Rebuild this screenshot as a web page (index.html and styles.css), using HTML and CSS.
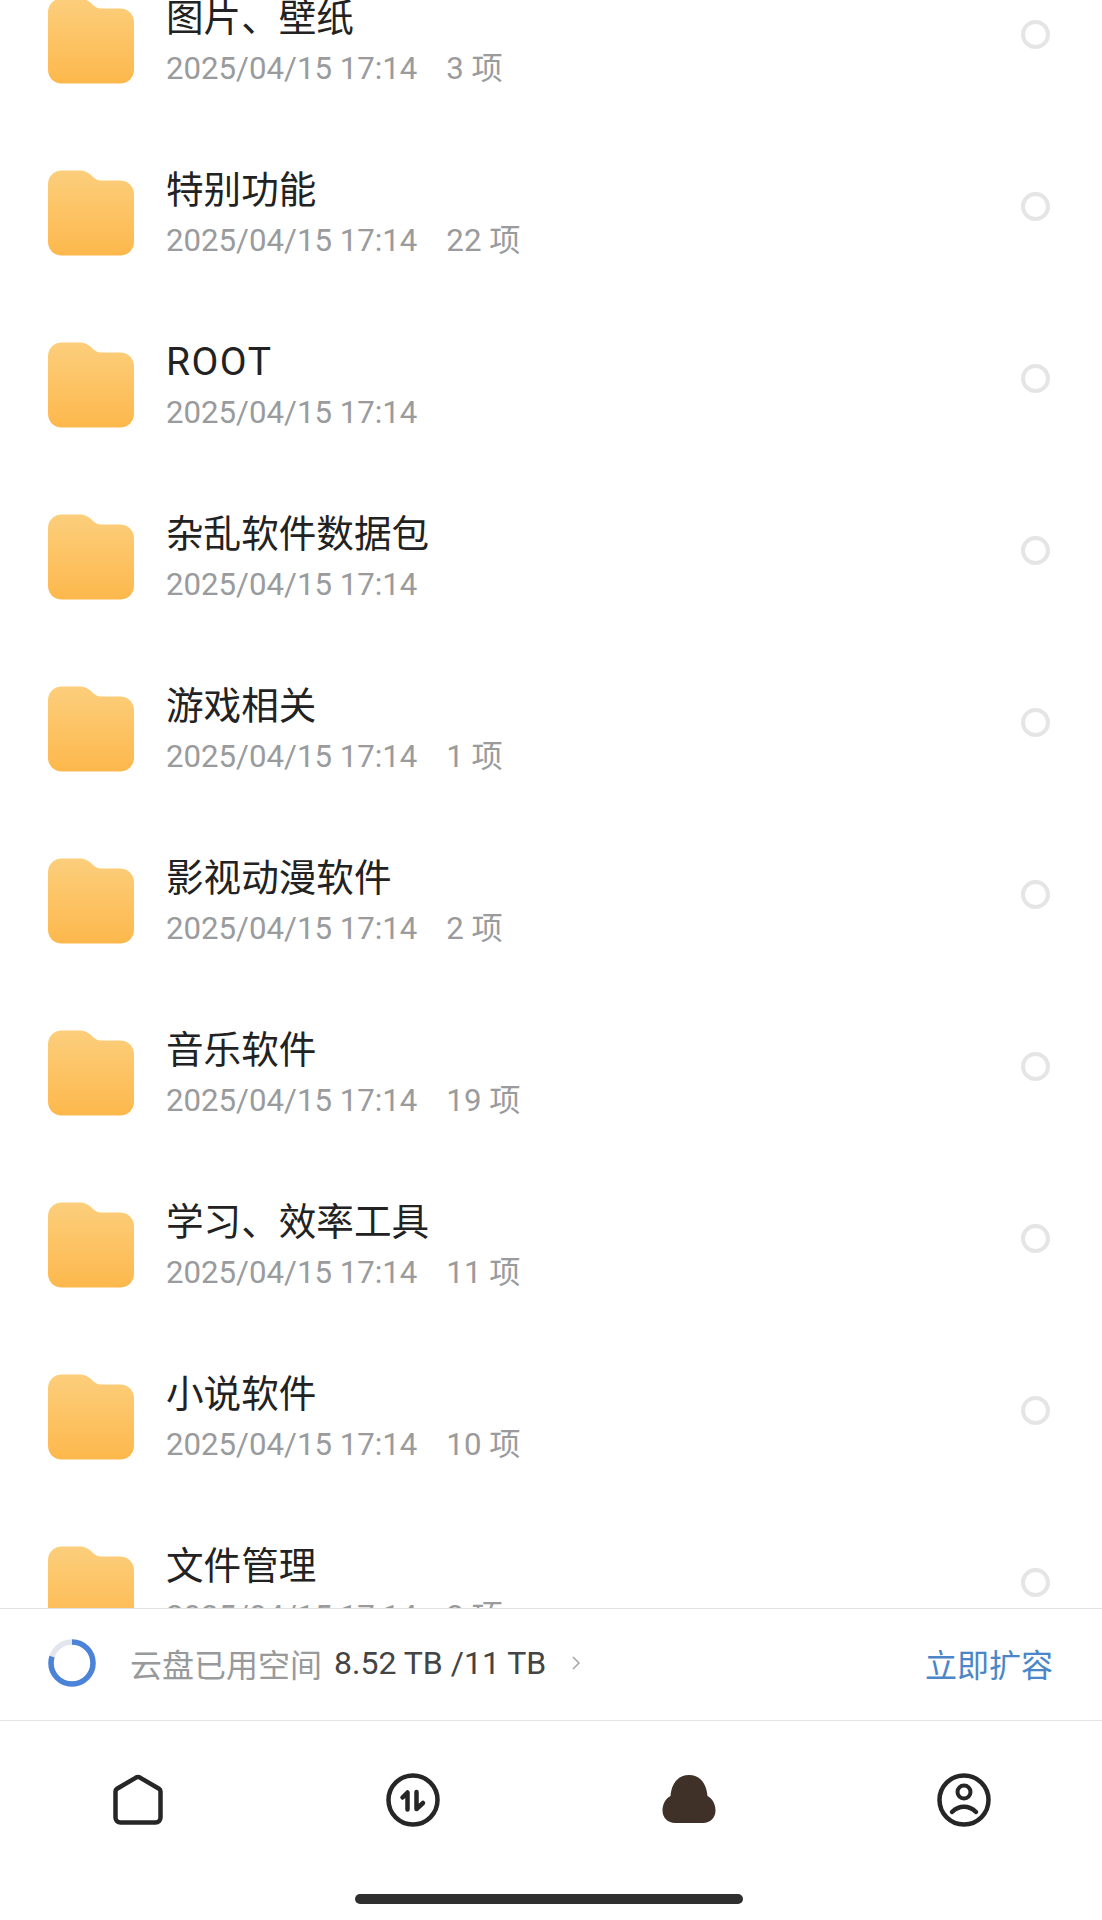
FILE: index.html
```html
<!DOCTYPE html>
<html lang="zh-CN">
<head>
<meta charset="utf-8">
<title>云盘</title>
<link rel="stylesheet" href="styles.css">
</head>
<body>
<svg class="defs" width="0" height="0" aria-hidden="true">
  <defs>
    <linearGradient id="fg" x1="0" y1="0" x2="0" y2="1">
      <stop offset="0" stop-color="#fcce7c"/>
      <stop offset="1" stop-color="#fdb84c"/>
    </linearGradient>
    <symbol id="folder" viewBox="0 0 87 86">
      <path fill="url(#fg)" d="M0 14C0 6 6 0 14 0H31C37 0 41 2 45 6C48 9 50 10 54 10H73C81 10 87 16 87 24V72C87 80 81 86 73 86H14C6 86 0 80 0 72Z"/>
    </symbol>
  </defs>
</svg>
<div class="page">
  <main class="list">
    <div class="row"><svg class="folder"><use href="#folder"/></svg><div class="info"><div class="name">图片、壁纸</div><div class="meta"><span>2025/04/15 17:14</span><span class="count">3 项</span></div></div><span class="radio"></span></div>
    <div class="row"><svg class="folder"><use href="#folder"/></svg><div class="info"><div class="name">特别功能</div><div class="meta"><span>2025/04/15 17:14</span><span class="count">22 项</span></div></div><span class="radio"></span></div>
    <div class="row"><svg class="folder"><use href="#folder"/></svg><div class="info"><div class="name name-latin">ROOT</div><div class="meta"><span>2025/04/15 17:14</span></div></div><span class="radio"></span></div>
    <div class="row"><svg class="folder"><use href="#folder"/></svg><div class="info"><div class="name">杂乱软件数据包</div><div class="meta"><span>2025/04/15 17:14</span></div></div><span class="radio"></span></div>
    <div class="row"><svg class="folder"><use href="#folder"/></svg><div class="info"><div class="name">游戏相关</div><div class="meta"><span>2025/04/15 17:14</span><span class="count">1 项</span></div></div><span class="radio"></span></div>
    <div class="row"><svg class="folder"><use href="#folder"/></svg><div class="info"><div class="name">影视动漫软件</div><div class="meta"><span>2025/04/15 17:14</span><span class="count">2 项</span></div></div><span class="radio"></span></div>
    <div class="row"><svg class="folder"><use href="#folder"/></svg><div class="info"><div class="name">音乐软件</div><div class="meta"><span>2025/04/15 17:14</span><span class="count">19 项</span></div></div><span class="radio"></span></div>
    <div class="row"><svg class="folder"><use href="#folder"/></svg><div class="info"><div class="name">学习、效率工具</div><div class="meta"><span>2025/04/15 17:14</span><span class="count">11 项</span></div></div><span class="radio"></span></div>
    <div class="row"><svg class="folder"><use href="#folder"/></svg><div class="info"><div class="name">小说软件</div><div class="meta"><span>2025/04/15 17:14</span><span class="count">10 项</span></div></div><span class="radio"></span></div>
    <div class="row"><svg class="folder"><use href="#folder"/></svg><div class="info"><div class="name">文件管理</div><div class="meta"><span>2025/04/15 17:14</span><span class="count">2 项</span></div></div><span class="radio"></span></div>
  </main>
  <section class="storage">
    <svg class="ring" viewBox="0 0 48 48">
      <circle class="ring-bg" cx="24" cy="24" r="21"/>
      <circle class="ring-fg" cx="24" cy="24" r="21" pathLength="100" stroke-dasharray="80 100" transform="rotate(-90 24 24)"/>
    </svg>
    <span class="label">云盘已用空间</span>
    <span class="used">8.52 TB /11 TB</span>
    <svg class="chev" viewBox="0 0 10 16"><path d="M2 2l6 6-6 6"/></svg>
    <span class="expand">立即扩容</span>
  </section>
  <nav class="nav">
    <div class="tabs">
      <div class="tab">
        <svg class="icon" viewBox="0 0 54 54"><path class="line" d="M4.5 18.5C4.5 17.3 5 16.4 6 15.8L25 4.6C26.3 3.9 27.7 3.9 29 4.6L48 15.8C49 16.4 49.5 17.3 49.5 18.5V44.5C49.5 47.3 47.3 49.5 44.5 49.5H9.5C6.700 49.5 4.500 47.3 4.500 44.500Z"/></svg>
      </div>
      <div class="tab">
        <svg class="icon" viewBox="0 0 54 54"><circle class="line" cx="27" cy="27" r="24.500"/><path class="line" d="M16.500 24.500L21.500 19.500V36.500M30.500 19V36L37 30"/></svg>
      </div>
      <div class="tab">
        <svg class="icon" viewBox="0 0 54 54"><path class="cloud" d="M13 50C6 50 .5 45 .5 37.500C.5 30.500 4 25.500 8.500 23C9.500 10 16.500 2 27 2S44.500 10 45.500 23C50 25.500 53.500 30.500 53.500 37.500C53.500 45 48 50 41 50Z"/></svg>
      </div>
      <div class="tab">
        <svg class="icon" viewBox="0 0 54 54"><circle class="line" cx="27" cy="27" r="24.500"/><circle class="line head" cx="27" cy="19" r="6.500"/><path class="line" d="M15 39C22 32 32 32 39 39"/></svg>
      </div>
    </div>
    <div class="home-bar"></div>
  </nav>
</div>
</body>
</html>
```
FILE: styles.css
```css
* { box-sizing: border-box; }
html, body { margin: 0; padding: 0; background: #fff; }
body { font-family: Roboto, "Noto Sans CJK SC", sans-serif; }
.defs { display: block; height: 0; }
.page { width: 1102px; height: 1920px; display: flex; flex-direction: column; overflow: hidden; }
.list { flex: 1; min-height: 0; overflow: hidden; }
.row { height: 172px; padding: 0 43px 0 48px; display: flex; align-items: center; }
.row:first-child { margin-top: -46px; }
.folder { width: 86px; height: 86px; flex: none; margin-top: 1px; }
.info { flex: 1; margin-left: 32px; min-width: 0; padding-top: 3px; }
.name { font-size: 37.600px; line-height: 48px; color: #222; height: 48px; }
.name-latin { font-size: 39px; letter-spacing: 1.500px; }
.meta { font-size: 31.200px; line-height: 42px; margin-top: 6px; color: #9a9b9d; white-space: nowrap; }
.count { margin-left: 29px; }
.radio { width: 29px; height: 29px; border: 4px solid #e5e5e5; border-radius: 50%; flex: none; margin: 0 9px 12px 0; }
.storage { height: 113px; flex: none; display: flex; align-items: center; padding: 0 49px 4px 48px; border-top: 1px solid #e2e2e2; border-bottom: 1px solid #e6e6e6; background: #fff; }
.ring { width: 48px; height: 48px; flex: none; }
.ring-bg, .ring-fg { fill: none; stroke-width: 5.500; }
.ring-bg { stroke: #e3e5ec; }
.ring-fg { stroke: #4a83d8; }
.label { margin-left: 34px; font-size: 32px; color: #97999b; }
.used { margin-left: 12px; font-size: 32px; color: #444; }
.chev { width: 10px; height: 16px; margin-left: 25px; fill: none; stroke: #a5a5a5; stroke-width: 1.500; }
.expand { margin-left: auto; font-size: 32px; color: #4a86c8; }
.nav { height: 199px; flex: none; display: flex; flex-direction: column; }
.tabs { display: grid; grid-template-columns: repeat(4, 1fr); padding-top: 52px; }
.tab { display: flex; justify-content: center; }
.icon { width: 54px; height: 54px; display: block; }
.line { fill: none; stroke: #262626; stroke-width: 4.500; stroke-linecap: round; stroke-linejoin: round; }
.head { stroke-width: 4px; }
.cloud { fill: #3f3127; }
.home-bar { width: 388px; height: 10px; background: #2f2f2f; border-radius: 5px; margin: auto 0 16px 355px; }
```
